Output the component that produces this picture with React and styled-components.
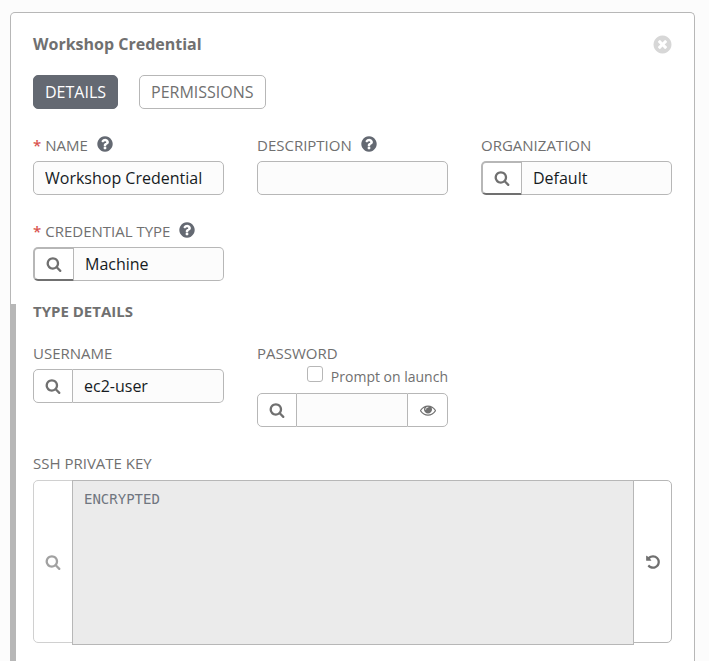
import React from 'react';
import styled, { createGlobalStyle } from 'styled-components';

const GlobalStyle = createGlobalStyle`
  *, *::before, *::after { box-sizing: border-box; }
  body {
    margin: 0;
    background: #fcfcfc;
    color: #707070;
    font-family: "Open Sans", sans-serif;
    font-size: 14px;
  }
  button, input, textarea { font: inherit; margin: 0; }
`;

const CIRCLE =
  'm384 192q0 209-103 385.5t-279.5 279.5-385.5 103-385.5-103-279.5-279.5-103-385.5 103-385.5 279.5-279.5 385.5-103 385.5 103 279.5 279.5 103 385.5z';

const ICONS = {
  search:
    'M1216 832q0-185-131.5-316.5t-316.5-131.5-316.5 131.5-131.5 316.5 131.5 316.5 316.5 131.5 316.5-131.5 131.5-316.5zm512 832q0 52-38 90t-90 38q-54 0-90-38l-343-342q-179 124-399 124-143 0-273.5-55.5t-225-150-150-225-55.5-273.5 55.5-273.5 150-225 225-150 273.5-55.5 273.5 55.5 225 150 150 225 55.5 273.5q0 220-124 399l343 343q37 37 37 90z',
  help:
    'M1024 1376v-192q0-14-9-23t-23-9h-192q-14 0-23 9t-9 23v192q0 14 9 23t23 9h192q14 0 23-9t9-23zm256-672q0-88-55.5-163t-138.5-116-170-41q-243 0-371 213-15 24 8 42l132 100q7 6 19 6 16 0 25-12 53-68 86-92 34-24 86-24 48 0 85.5 26t37.5 59q0 38-20 61t-68 45q-63 28-115.5 86.5t-52.5 125.5v36q0 14 9 23t23 9h192q14 0 23-9t9-23q0-19 21.5-49.5t54.5-49.5q32-18 49-28.5t46-35 44.5-48 28-60.5 12.5-81z' +
    CIRCLE,
  close:
    'M1277 1122q0-26-19-45l-181-181 181-181q19-19 19-45 0-27-19-46l-90-90q-19-19-46-19-26 0-45 19l-181 181-181-181q-19-19-45-19-27 0-46 19l-90 90q-19 19-19 46 0 26 19 45l181 181-181 181q-19 19-19 45 0 27 19 46l90 90q19 19 46 19 26 0 45-19l181-181 181 181q19 19 45 19 27 0 46-19l90-90q19-19 19-46zm387-226q0 209-103 385.5t-279.5 279.5-385.5 103-385.5-103-279.5-279.5-103-385.5 103-385.5 279.5-279.5 385.5-103 385.5 103 279.5 279.5 103 385.5z',
  eye:
    'M1664 960q-152-236-381-353 61 104 61 225 0 185-131.5 316.5t-316.5 131.5-316.5-131.5-131.5-316.5q0-121 61-225-229 117-381 353 133 205 333.5 326.5t434.5 121.5 434.5-121.5 333.5-326.5zm-720-384q0-20-14-34t-34-14q-125 0-214.5 89.5t-89.5 214.5q0 20 14 34t34 14 34-14 14-34q0-86 61-147t147-61q20 0 34-14t14-34zm848 384q0 34-20 69-140 230-376.5 368.5t-499.5 138.5-499.5-139-376.5-368q-20-35-20-69t20-69q140-229 376.5-368t499.5-139 499.5 139 376.5 368q20 35 20 69z',
  undo:
    'M1664 896q0 156-61 298t-164 245-245 164-298 61q-172 0-327-72.5t-264-204.5q-7-10-6.5-22.5t8.5-20.5l137-138q10-9 25-9 16 2 23 12 73 95 179 147t225 52q104 0 198.5-40.5t163.5-109.5 109.5-163.5 40.5-198.5-40.5-198.5-109.5-163.5-163.5-109.5-198.5-40.5q-98 0-188 35.5t-160 101.5l137 138q31 30 14 69-17 40-59 40h-448q-26 0-45-19t-19-45v-448q0-42 40-59 39-17 69 14l130 129q107-101 244.5-156.5t284.5-55.5q156 0 298 61t245 164 164 245 61 298z',
};

const Glyph = styled.svg`
  display: block;
  flex: none;
  fill: currentColor;
`;

function Icon({ name, size = 16 }) {
  return (
    <Glyph width={size} height={size} viewBox="0 0 1792 1792" aria-hidden="true">
      <path d={ICONS[name]} />
    </Glyph>
  );
}

const Page = styled.main`
  display: flex;
  flex-direction: column;
  min-height: 100vh;
  padding: 12px 14px 0 10px;
`;

const Panel = styled.section`
  flex: 1;
  display: flex;
  flex-direction: column;
  padding-top: 20px;
  background: #fff;
  border: 1px solid #b7b7b7;
  border-bottom: 0;
  border-radius: 5px 5px 0 0;
`;

const Header = styled.header`
  display: flex;
  justify-content: space-between;
  align-items: center;
  padding: 0 21px 0 22px;
`;

const Title = styled.h1`
  margin: 0;
  font-size: 16px;
  line-height: 22px;
  font-weight: 700;
`;

const PlainButton = styled.button`
  display: flex;
  padding: 0;
  border: 0;
  background: none;
  color: ${(p) => p.$color};
  cursor: pointer;
`;

const Tabs = styled.nav`
  display: flex;
  gap: 21px;
  padding: 20px 22px 26px;
`;

const Tab = styled.button`
  height: 34px;
  padding: 0 11px;
  font-size: 16px;
  line-height: 32px;
  border: 1px solid ${(p) => (p.$active ? '#646972' : '#b7b7b7')};
  border-radius: 5px;
  background: ${(p) => (p.$active ? '#646972' : '#fff')};
  color: ${(p) => (p.$active ? '#fff' : '#707070')};
  cursor: pointer;
`;

const FieldGrid = styled.div`
  display: grid;
  grid-template-columns: repeat(3, minmax(0, 1fr));
  gap: 26px 33px;
  align-items: start;
  padding: 0 22px;
`;

const Field = styled.div`
  grid-column: ${(p) => (p.$wide ? '1 / -1' : 'auto')};
`;

const LabelRow = styled.div`
  display: flex;
  align-items: flex-start;
  gap: 8px;
  height: 20px;
  margin-bottom: ${(p) => (p.$tight ? 0 : 6)}px;
`;

const Label = styled.label`
  font-size: 15px;
  line-height: 20px;
  white-space: nowrap;
`;

const Required = styled.span`
  margin-right: 4px;
  font-weight: 600;
  color: #d9534f;
`;

const PromptRow = styled.div`
  display: flex;
  justify-content: flex-end;
  align-items: flex-start;
  gap: 8px;
  height: 24px;
  margin-bottom: 6px;
`;

const PromptLabel = styled.label`
  font-size: 14px;
  line-height: 28px;
`;

const Checkbox = styled.input`
  appearance: none;
  width: 16px;
  height: 16px;
  margin-top: 3px;
  border: 1px solid #b7b7b7;
  border-radius: 3px;
  background: #fff;
`;

const Group = styled.div`
  display: flex;
  align-items: flex-start;
  min-height: 34px;
`;

const TextInput = styled.input`
  flex: 1;
  min-width: 0;
  width: 100%;
  height: 34px;
  padding: 0 11px;
  font-size: 16px;
  color: #161b1f;
  background: #fcfcfc;
  border: 1px solid #b7b7b7;
  border-left-width: ${(p) => (p.$before ? 0 : 1)}px;
  border-right-width: ${(p) => (p.$after ? 0 : 1)}px;
  border-radius: ${(p) => (p.$before ? '0' : '5px')} ${(p) => (p.$after ? '0 0' : '5px 5px')} ${(p) => (p.$before ? '0' : '5px')};
  outline: none;
`;

const AddonButton = styled.button`
  flex: none;
  display: flex;
  align-items: center;
  justify-content: center;
  width: ${(p) => (p.$lookup || p.$end ? 41 : 40)}px;
  height: ${(p) => (p.$tall ? 163 : 34)}px;
  padding: 0;
  color: #707070;
  background: #fff;
  border: 1px solid #b7b7b7;
  border-radius: ${(p) => (p.$end ? '0 5px 5px 0' : '5px 0 0 5px')};
  opacity: ${(p) => (p.disabled ? 0.65 : 1)};
  ${(p) =>
    p.$lookup &&
    `
    border-width: 2px 1px 2px 2px;
    border-bottom-color: #707070;
  `}
`;

const KeyGroup = styled(Group)`
  padding-top: 1px;
`;

const KeyText = styled.textarea`
  flex: 1;
  min-width: 0;
  height: 165px;
  margin: 0 -1px;
  padding: 8px 11px;
  font-family: "DejaVu Sans Mono", monospace;
  font-size: 14px;
  line-height: 20px;
  color: #707680;
  background: #ebebeb;
  border: 1px solid #b7b7b7;
  border-radius: 0;
  resize: none;
  outline: none;
  z-index: 1;
`;

const EndButton = styled(AddonButton)`
  width: 39px;
  z-index: 2;
`;

const TypeSection = styled.section`
  flex: 1;
  margin: 23px 0 0 -1px;
  border-left: 6px solid #b7b7b7;
  padding-bottom: 16px;

  ${FieldGrid} { padding-left: 17px; }
`;

const SectionTitle = styled.h2`
  margin: 0;
  padding: 0 17px 25px;
  font-size: 15px;
  line-height: 14px;
  font-weight: 700;
`;

function FieldLabel({ id, text, required, help, tight }) {
  return (
    <LabelRow $tight={tight}>
      <Label htmlFor={id}>
        {required && <Required>*</Required>}
        {text}
      </Label>
      {help && (
        <PlainButton type="button" $color="#646972" aria-label="Help">
          <Icon name="help" size={18} />
        </PlainButton>
      )}
    </LabelRow>
  );
}

function Search(props) {
  return (
    <AddonButton type="button" aria-label="Search" {...props}>
      <Icon name="search" />
    </AddonButton>
  );
}

export default function App() {
  return (
    <>
      <GlobalStyle />
      <Page>
        <Panel>
          <Header>
            <Title>Workshop Credential</Title>
            <PlainButton type="button" $color="#d7d7d7" aria-label="Close">
              <Icon name="close" size={21} />
            </PlainButton>
          </Header>
          <Tabs>
            <Tab type="button" $active>DETAILS</Tab>
            <Tab type="button">PERMISSIONS</Tab>
          </Tabs>

          <FieldGrid>
            <Field>
              <FieldLabel id="name" text="NAME" required help />
              <Group>
                <TextInput id="name" defaultValue="Workshop Credential" />
              </Group>
            </Field>
            <Field>
              <FieldLabel id="description" text="DESCRIPTION" help />
              <Group>
                <TextInput id="description" />
              </Group>
            </Field>
            <Field>
              <FieldLabel id="organization" text="ORGANIZATION" />
              <Group>
                <Search $lookup />
                <TextInput id="organization" defaultValue="Default" $before />
              </Group>
            </Field>
            <Field>
              <FieldLabel id="type" text="CREDENTIAL TYPE" required help />
              <Group>
                <Search $lookup />
                <TextInput id="type" defaultValue="Machine" $before />
              </Group>
            </Field>
          </FieldGrid>

          <TypeSection>
            <SectionTitle>TYPE DETAILS</SectionTitle>
            <FieldGrid>
              <Field>
                <FieldLabel id="username" text="USERNAME" />
                <Group>
                  <Search />
                  <TextInput id="username" defaultValue="ec2-user" $before />
                </Group>
              </Field>
              <Field>
                <FieldLabel id="password" text="PASSWORD" tight />
                <PromptRow>
                  <Checkbox type="checkbox" id="prompt" />
                  <PromptLabel htmlFor="prompt">Prompt on launch</PromptLabel>
                </PromptRow>
                <Group>
                  <Search />
                  <TextInput id="password" type="password" $before $after />
                  <AddonButton type="button" $end aria-label="Show password">
                    <Icon name="eye" />
                  </AddonButton>
                </Group>
              </Field>
              <Field $wide>
                <FieldLabel id="key" text="SSH PRIVATE KEY" />
                <KeyGroup>
                  <Search $tall disabled />
                  <KeyText id="key" readOnly defaultValue="ENCRYPTED" />
                  <EndButton type="button" $end $tall aria-label="Revert">
                    <Icon name="undo" />
                  </EndButton>
                </KeyGroup>
              </Field>
            </FieldGrid>
          </TypeSection>
        </Panel>
      </Page>
    </>
  );
}
